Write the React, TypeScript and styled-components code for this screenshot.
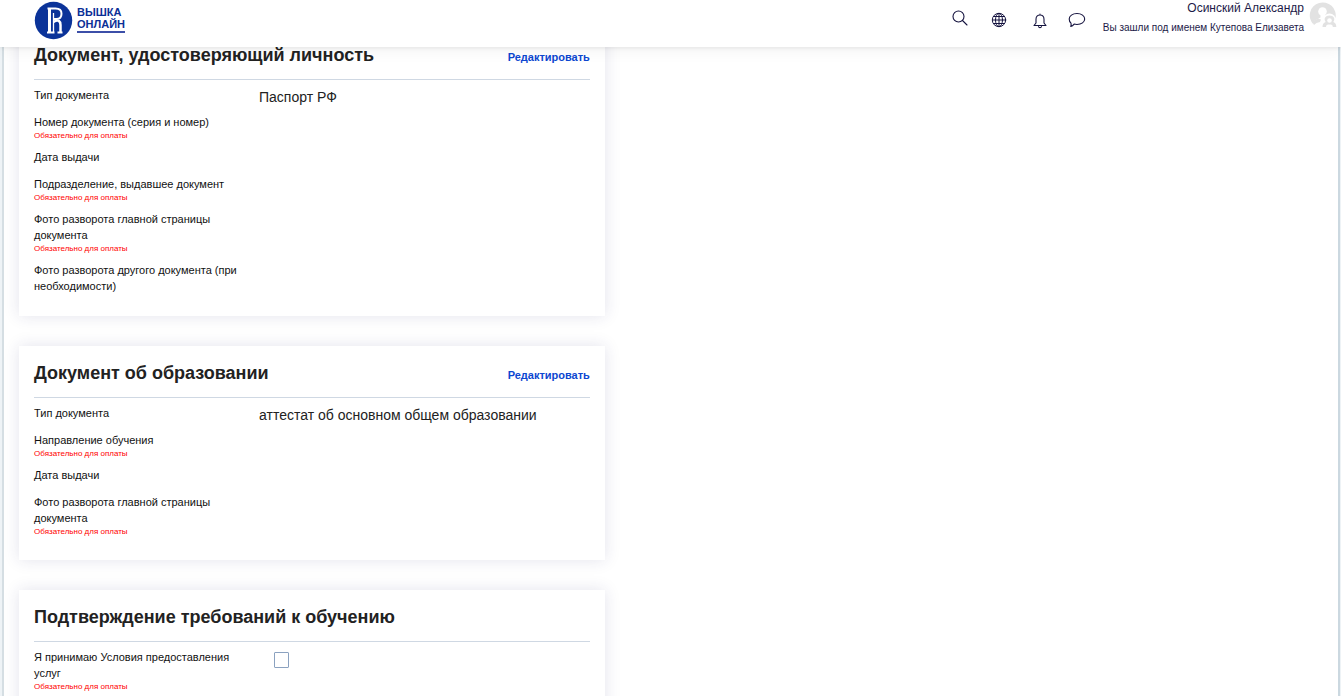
import React from "react";
import styled, { createGlobalStyle } from "styled-components";

const GlobalStyle = createGlobalStyle`
  *, *::before, *::after { box-sizing: border-box; }
  html { background: #eef3f6; }
  body {
    margin: 0;
    background: #eef3f6;
    color: #222;
    font-family: "Liberation Sans", Arial, sans-serif;
  }
  html, body { height: 100%; overflow: hidden; }
  #root { height: 100%; }
  h2, p { margin: 0; }
`;

const Page = styled.div`
  display: flex;
  flex-direction: column;
  height: 100%;
`;

const Header = styled.header`
  position: relative;
  z-index: 2;
  flex: none;
  display: flex;
  align-items: flex-start;
  justify-content: space-between;
  height: 47px;
  padding: 0 4px 0 34px;
  background: #fff;
  box-shadow: 0 1px 4px rgba(0, 0, 0, 0.08), 0 4px 16px rgba(0, 0, 0, 0.05);
`;

const Logo = styled.a`
  display: flex;
  align-items: flex-start;
  gap: 4px;
  padding-top: 1px;
  color: #0b2f96;
  text-decoration: none;
`;

const LogoText = styled.span`
  display: flex;
  flex-direction: column;
  margin-top: 5px;
  padding-bottom: 1px;
  border-bottom: 2px solid #3c4fa8;
  font-size: 11px;
  line-height: 12px;
  font-weight: 700;
`;

const Tools = styled.div`
  display: flex;
  align-items: flex-start;
`;

const IconButton = styled.button<{ $right: number; $top: number }>`
  display: block;
  margin: ${(p) => p.$top}px ${(p) => p.$right}px 0 0;
  padding: 0;
  border: 0;
  background: none;
  color: #15133f;
  svg { display: block; }
`;

const User = styled.div`
  display: flex;
  flex-direction: column;
  align-items: flex-end;
  margin-right: 5px;
  color: #1c1a48;
`;

const UserName = styled.a`
  color: inherit;
  font-size: 12px;
  line-height: 16px;
  text-decoration: none;
`;

const LoginNote = styled.span`
  margin-top: 4px;
  font-size: 10px;
  line-height: 16px;
`;

const Main = styled.main`
  flex: 1;
  min-height: 0;
  overflow: hidden;
  margin: 0 1px 0 2px;
  padding: 0 17px 0 15px;
  background: #fff;
  border-left: 2px solid #d5dee3;
  border-right: 2px solid #cbd8e0;
`;

const Column = styled.div`
  display: flex;
  flex-direction: column;
  gap: 30px;
  width: 45%;
  min-width: 480px;
  margin-top: -19px;
`;

const Card = styled.section`
  padding: 0 15px 22px;
  background: #fff;
  box-shadow: 0 0 15px rgba(40, 40, 110, 0.13);
`;

const CardHead = styled.div`
  display: flex;
  align-items: center;
  justify-content: space-between;
  height: 52px;
  padding-top: 2px;
  border-bottom: 1px solid #cfd8e3;
`;

const Title = styled.h2`
  font-size: 18px;
  line-height: 24px;
  font-weight: 700;
`;

const EditLink = styled.a`
  padding-top: 4px;
  color: #0d47d1;
  font-size: 11px;
  line-height: 16px;
  font-weight: 700;
  text-decoration: none;
`;

const Fields = styled.div`
  display: flex;
  flex-direction: column;
  gap: 7px;
  padding-top: 7px;
`;

const Field = styled.div<{ $required?: boolean }>`
  display: grid;
  grid-template-columns: 207px 1fr;
  column-gap: 18px;
  &:not(:last-child) {
    padding-bottom: ${(p) => (p.$required ? 0 : 4)}px;
  }
`;

const Label = styled.label`
  display: block;
  color: #111;
  font-size: 11px;
  line-height: 16px;
`;

const Required = styled.p`
  color: #f00;
  font-size: 8px;
  line-height: 12px;
`;

const Value = styled.output`
  height: 16px;
  padding-top: 2px;
  font-size: 14px;
  line-height: 16px;
  white-space: nowrap;
`;

const Checkbox = styled.input`
  appearance: none;
  width: 15px;
  height: 16px;
  margin: 3px 0 0 15px;
  border: 1px solid #8ba2c0;
  border-radius: 1px;
  background: #fff;
`;

type Item = { label: string; value?: string; required?: boolean; check?: boolean };

const cards: { id: string; title: string; editable: boolean; items: Item[] }[] = [
  {
    id: "identity",
    title: "Документ, удостоверяющий личность",
    editable: true,
    items: [
      { label: "Тип документа", value: "Паспорт РФ" },
      { label: "Номер документа (серия и номер)", required: true },
      { label: "Дата выдачи" },
      { label: "Подразделение, выдавшее документ", required: true },
      { label: "Фото разворота главной страницы документа", required: true },
      { label: "Фото разворота другого документа (при необходимости)" },
    ],
  },
  {
    id: "education",
    title: "Документ об образовании",
    editable: true,
    items: [
      { label: "Тип документа", value: "аттестат об основном общем образовании" },
      { label: "Направление обучения", required: true },
      { label: "Дата выдачи" },
      { label: "Фото разворота главной страницы документа", required: true },
    ],
  },
  {
    id: "terms",
    title: "Подтверждение требований к обучению",
    editable: false,
    items: [{ label: "Я принимаю Условия предоставления услуг", required: true, check: true }],
  },
];

const Emblem = () => (
  <svg width="39" height="39" viewBox="0 0 39 39" aria-hidden="true">
    <circle cx="19.5" cy="19.5" r="18.7" fill="#0b3399" />
    <g fill="none" stroke="#fff">
      <path d="M13.500 7.500h8c4 0 6 2 6 5.200s-2 5.200-5 5.200h-3" strokeWidth="2" />
      <path d="M15.500 8v23" strokeWidth="3" />
      <path d="M19.500 12v19" strokeWidth="1.300" />
      <path d="M19.500 21c5-3.500 7-.5 7 3v7" strokeWidth="2.500" />
      <path d="M13 31.500h7.500M23.500 31.500h5" strokeWidth="1.800" />
    </g>
  </svg>
);

const stroke = { fill: "none", stroke: "currentColor", strokeLinecap: "round", strokeLinejoin: "round" } as const;

const SearchIcon = () => (
  <svg width="16" height="16" viewBox="0 0 16 16" {...stroke} strokeWidth="1.1">
    <circle cx="6.500" cy="6.500" r="5.500" />
    <path d="M10.500 10.500 15 15" />
  </svg>
);

const GlobeIcon = () => (
  <svg width="16" height="16" viewBox="0 0 16 16" {...stroke} strokeWidth="1">
    <circle cx="8" cy="8" r="6.700" />
    <ellipse cx="8" cy="8" rx="3.500" ry="6.700" />
    <path d="M8 1.500v13M1.500 8h13M2.500 4.500h11M2.500 11.500h11" />
  </svg>
);

const BellIcon = () => (
  <svg width="14" height="16" viewBox="0 0 14 16" {...stroke} strokeWidth="1.1">
    <path d="M7 1v1M3 10V6.200C3 3.500 4.500 2 7 2s4 1.500 4 4.200V10l2 2.500H1L3 10Z" />
    <path d="M5.500 13.500c.3 1.500 2.700 1.500 3 0" />
  </svg>
);

const ChatIcon = () => (
  <svg width="18" height="16" viewBox="0 0 18 16" {...stroke} strokeWidth="1.100">
    <path d="M9 1.500c4.500 0 7.700 2.400 7.700 5.500s-3.200 5.500-7.700 5.500c-1 0-2-.1-2.900-.4C5.200 13.300 4 14.200 2.800 14.500c.4-1 .4-2.200.2-3.400C1.800 10.100 1.200 8.600 1.200 7 1.200 3.900 4.500 1.500 9 1.500Z" />
  </svg>
);

const Avatar = () => (
  <svg width="28" height="28" viewBox="0 0 28 28" role="img" aria-label="Осинский Александр">
    <path d="M4.500 24.500A13 13 0 1 1 26.500 18L14 20Z" fill="#e2e2e2" />
    <circle cx="13.500" cy="11.500" r="4.300" fill="#fff" />
    <path d="M11.500 14v3.500L4 21.500V28h12l2-8-2-6Z" fill="#fff" />
    <path d="M5 25 3 21.500 9 18.500l3 1-1 2.500-3.500 1Z" fill="#e2e2e2" />
    <circle cx="20.500" cy="20" r="6.500" fill="#fff" />
    <path d="M13.500 27c0-2.800 1-4 3.200-5-2.500-3.500-.2-6.500 3.800-6.500s6.300 3 3.800 6.500c2 .8 3 2.200 3 5h-3.500c0-2-1-2.500-3.300-2.500s-3.500.5-3.500 2.500Z" fill="#e2e2e2" />
    <circle cx="20.500" cy="20.500" r="2.300" fill="#fff" />
  </svg>
);

const FieldRow = ({ item, id }: { item: Item; id: string }) => (
  <Field $required={item.required}>
    <div>
      <Label htmlFor={id}>{item.label}</Label>
      {item.required && <Required>Обязательно для оплаты</Required>}
    </div>
    {item.check ? <Checkbox type="checkbox" id={id} /> : <Value id={id}>{item.value}</Value>}
  </Field>
);

export default function App() {
  return (
    <Page>
      <GlobalStyle />
      <Header>
        <Logo href="#">
          <Emblem />
          <LogoText>
            <span>ВЫШКА</span>
            <span>ОНЛАЙН</span>
          </LogoText>
        </Logo>
        <Tools>
          <IconButton $top={10} $right={23} aria-label="Поиск"><SearchIcon /></IconButton>
          <IconButton $top={12} $right={26} aria-label="Язык"><GlobeIcon /></IconButton>
          <IconButton $top={13} $right={21} aria-label="Уведомления"><BellIcon /></IconButton>
          <IconButton $top={12} $right={17} aria-label="Сообщения"><ChatIcon /></IconButton>
          <User>
            <UserName href="#">Осинский Александр</UserName>
            <LoginNote>Вы зашли под именем Кутепова Елизавета</LoginNote>
          </User>
          <Avatar />
        </Tools>
      </Header>
      <Main>
        <Column>
          {cards.map((card) => (
            <Card key={card.id}>
              <CardHead>
                <Title>{card.title}</Title>
                {card.editable && <EditLink href="#">Редактировать</EditLink>}
              </CardHead>
              <Fields>
                {card.items.map((item, i) => (
                  <FieldRow key={item.label} item={item} id={`${card.id}-${i}`} />
                ))}
              </Fields>
            </Card>
          ))}
        </Column>
      </Main>
    </Page>
  );
}
